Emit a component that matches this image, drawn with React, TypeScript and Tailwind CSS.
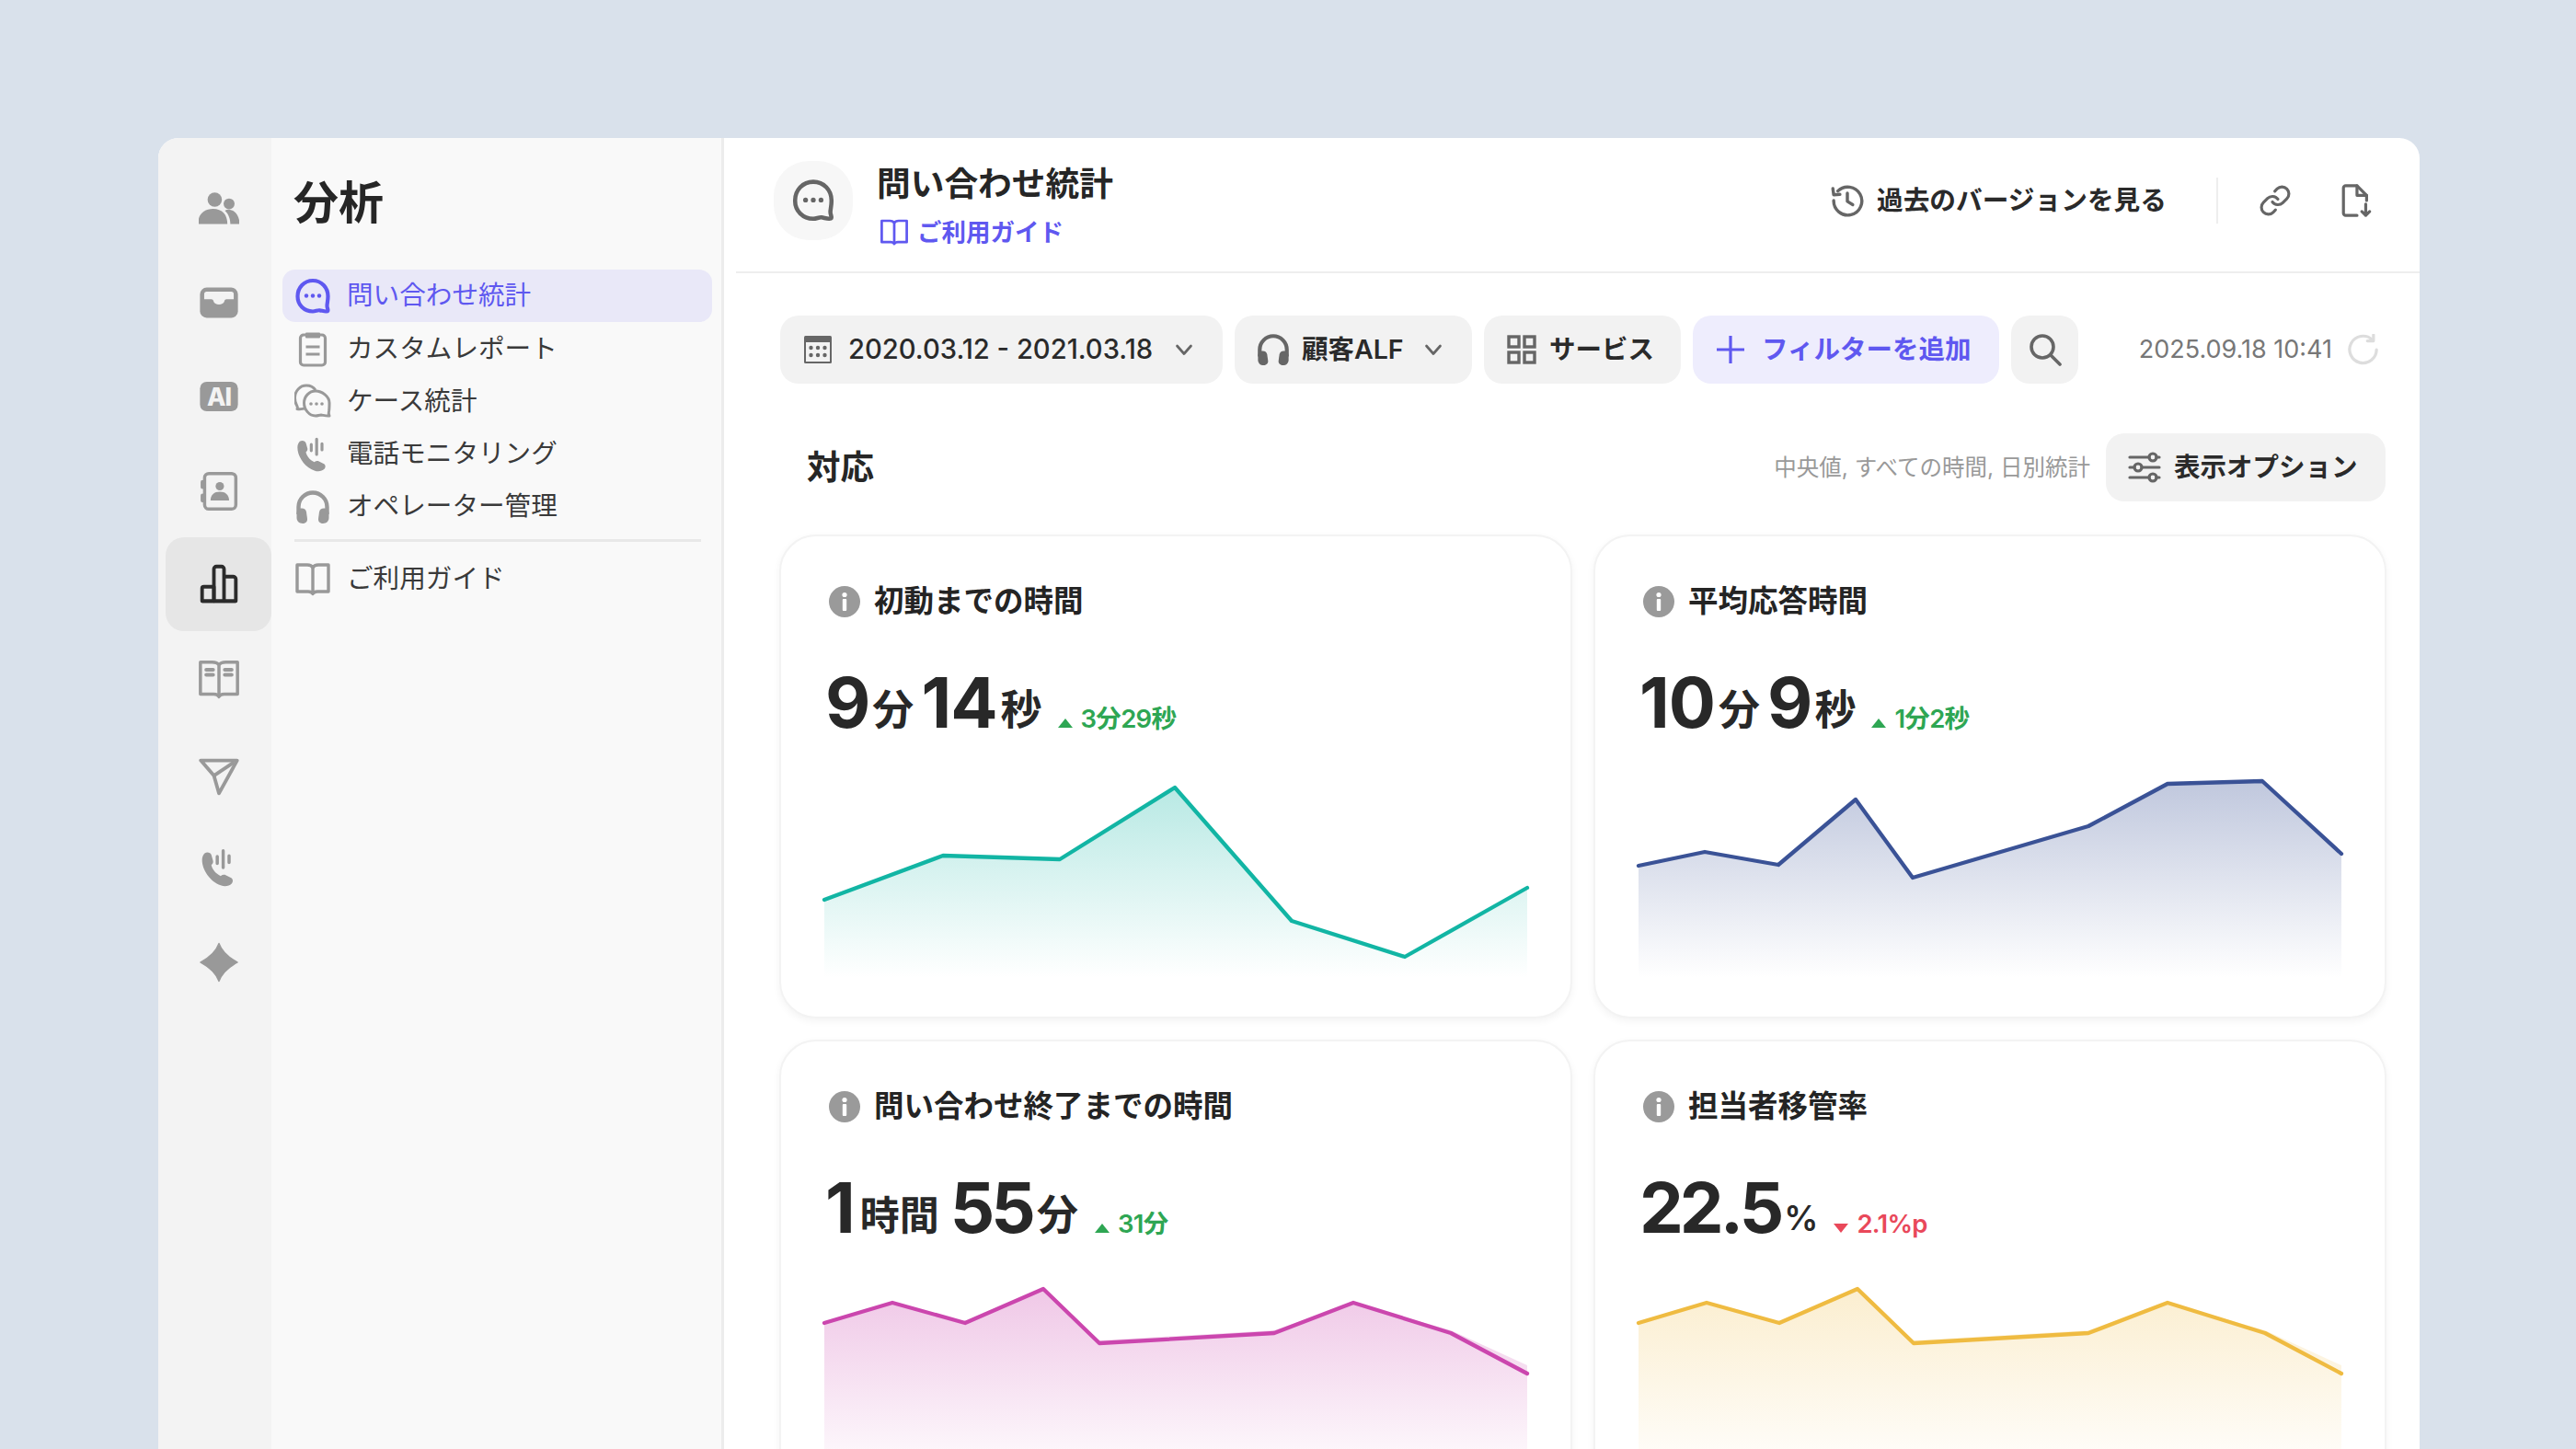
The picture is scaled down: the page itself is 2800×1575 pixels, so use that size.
import React from 'react';

const FONT = "font-['Inter','Noto_Sans_CJK_JP',sans-serif]";

type IconProps = { className?: string };

// ---- rail icons
function UsersIcon({ className }: IconProps) {
  return (
    <svg viewBox="0 0 48 48" className={className} fill="currentColor">
      <circle cx="19" cy="12" r="8.500" />
      <circle cx="36" cy="17" r="6.500" />
      <path d="M-1 41c0-11 7-18 18-18s17 7 17 18z" />
      <path d="M31 25c2-1 4-1.500 6-1 7 1 11.500 9 11.500 17H37.500c0-6-2-12-6.500-16z" />
    </svg>
  );
}

function InboxIcon({ className }: IconProps) {
  return (
    <svg viewBox="0 0 48 48" className={className}>
      <rect x="1.500" y="6" width="45" height="36" rx="8" fill="currentColor" />
      <path d="M6.500 14a3 3 0 0 1 3-3h29a3 3 0 0 1 3 3v6H33c-1.500 0-2 .8-2.500 2-1.200 5.500-11.800 5.500-13 0-.5-1.200-1-2-2.500-2H6.500z" fill="#f3f3f3" />
    </svg>
  );
}

function AiIcon({ className }: IconProps) {
  return (
    <svg viewBox="0 0 48 48" className={className}>
      <rect x="1.500" y="6.500" width="45" height="35" rx="8" fill="currentColor" />
      <text x="24" y="35" textAnchor="middle" fontFamily="Inter" fontWeight="800" fontSize="29" letterSpacing="-1" fill="#f3f3f3">AI</text>
    </svg>
  );
}

function ContactIcon({ className }: IconProps) {
  return (
    <svg viewBox="0 0 48 48" className={className} fill="none" stroke="currentColor" strokeWidth="3.800">
      <rect x="7" y="3" width="37" height="42" rx="5" />
      <path d="M4.500 13v6M4.500 29v6" strokeWidth="4.500" strokeLinecap="round" />
      <circle cx="25" cy="18" r="5" fill="currentColor" stroke="none" />
      <path d="M14 35c0-7 4.500-10.500 11-10.500S36 28 36 35z" fill="currentColor" stroke="none" />
    </svg>
  );
}

function ChartIcon({ className }: IconProps) {
  return (
    <svg viewBox="0 0 48 48" className={className} fill="none" stroke="currentColor" strokeWidth="4.200" strokeLinejoin="round">
      <path d="M4 44V29a2 2 0 0 1 2-2h12v17z" />
      <path d="M18 44V6a3 3 0 0 1 3-3h6a3 3 0 0 1 3 3v38z" />
      <path d="M30 15h11a3 3 0 0 1 3 3v26H30" />
      <path d="M4 44h40" />
    </svg>
  );
}

function ManualIcon({ className }: IconProps) {
  return (
    <svg viewBox="0 0 48 48" className={className} fill="none" stroke="currentColor" strokeWidth="3.800" strokeLinejoin="round">
      <path d="M2 3h14c4 0 6.500 1 8 3.500C25.500 4 28 3 32 3h14v38H30c-3 0-5 1-6 3-1-2-3-3-6-3H2z" />
      <path d="M24 7v36" />
      <path d="M9 12h8M9 18h8M31 12h8M31 18h8" strokeWidth="4.500" strokeLinecap="round" />
    </svg>
  );
}

function SendIcon({ className }: IconProps) {
  return (
    <svg viewBox="0 0 48 48" className={className} fill="none" stroke="currentColor" strokeWidth="4.200" strokeLinejoin="round">
      <path d="M2.500 5h43L24 44l-6-21z" />
      <path d="M18 23 42 7" />
    </svg>
  );
}

function CallIcon({ className }: IconProps) {
  return (
    <svg viewBox="0 0 48 48" className={className}>
      <path d="M7 7c3-2 7-1 8 2l2 7c.5 2-.5 3.500-2 5 1 5 5 10 11 13 2-1.500 4-2 6-1l6 3c3 1.500 3 5 1 7-3 3-8 4-13 2C14 41 4 27 4 15c0-3 1-6 3-8z" fill="currentColor" />
      <path d="M29 4v20M22 11v8M36 10v8" stroke="currentColor" strokeWidth="3.800" strokeLinecap="round" fill="none" />
    </svg>
  );
}

function SparkIcon({ className }: IconProps) {
  return (
    <svg viewBox="0 0 48 48" className={className} fill="currentColor">
      <path d="M24 1.500C27 10 35 18 46 24 35 30 27 38 24 46.500 21 38 13 30 2 24 13 18 21 10 24 1.500z" strokeLinejoin="round" stroke="currentColor" strokeWidth="1.500" />
    </svg>
  );
}

// ---- menu icons
function ChatIcon({ className, strokeWidth = 4.200 }: IconProps & { strokeWidth?: number }) {
  return (
    <svg viewBox="0 0 40 40" className={className} fill="none" stroke="currentColor" strokeWidth={strokeWidth}>
      <path d="M20 3C10.500 3 3.500 10.500 3.500 20S10.500 36.500 20 36.500c3 0 5-1.500 7.500-1.200 2.500.3 8 2.200 8.800.7.8-1.500-1-3-.8-6 .2-3 1-5.500 1-10C36.500 10.500 29.500 3 20 3z" strokeLinejoin="round" />
      <circle cx="13" cy="19.500" r="2.200" fill="currentColor" stroke="none" />
      <circle cx="20" cy="19.500" r="2.200" fill="currentColor" stroke="none" />
      <circle cx="27" cy="19.500" r="2.200" fill="currentColor" stroke="none" />
    </svg>
  );
}

function ClipboardIcon({ className }: IconProps) {
  return (
    <svg viewBox="0 0 40 40" className={className} fill="none" stroke="currentColor" strokeWidth="3.200">
      <rect x="6.500" y="5" width="27" height="33" rx="3.500" />
      <path d="M13 3.500h14v4H13z" fill="currentColor" strokeWidth="2" strokeLinejoin="round" />
      <path d="M12.500 18h15M12.500 26h15" strokeWidth="3.200" />
    </svg>
  );
}

function ChatsIcon({ className }: IconProps) {
  return (
    <svg viewBox="0 0 40 40" className={className} fill="none" stroke="currentColor" strokeWidth="3" strokeLinejoin="round">
      <path d="M11 28c-2 0-4 1.500-8 .5 1-1.500 0-3-.5-4C1 22 .5 19 .5 16.500.5 9 6 3 13 3c4 0 8 2 10 5" />
      <path d="M23 9c-7 0-12.500 6-12.500 13S16 36 23 36c2.500 0 4-1 6-1 2 .2 6 1.500 9 1-1-1.500-1-3-.5-5 .5-2.500 .5-6 .5-9 0-7-8-13-15-13z" />
      <circle cx="18" cy="23" r="1.800" fill="currentColor" stroke="none" />
      <circle cx="24" cy="23" r="1.800" fill="currentColor" stroke="none" />
      <circle cx="30" cy="23" r="1.800" fill="currentColor" stroke="none" />
    </svg>
  );
}

function HeadsetIcon({ className }: IconProps) {
  return (
    <svg viewBox="0 0 40 40" className={className} fill="none">
      <path d="M4.500 28v-8c0-8.500 7-15.500 15.500-15.500S35.500 11.500 35.500 20v8" stroke="currentColor" strokeWidth="4.400" />
      <path d="M2.500 27c0-3 2-5.500 5.500-5.500 2.800 0 4.500 1.500 5 4l1 7.500c.3 2.500-1.500 5-5 5-4 0-6.500-3-6.500-6z" fill="currentColor" />
      <path d="M37.500 27c0-3-2-5.500-5.500-5.500-2.800 0-4.500 1.500-5 4l-1 7.500c-.3 2.500 1.500 5 5 5 4 0 6.500-3 6.500-6z" fill="currentColor" />
    </svg>
  );
}

function BookIcon({ className }: IconProps) {
  return (
    <svg viewBox="0 0 40 40" className={className} fill="none" stroke="currentColor" strokeWidth="3.400" strokeLinejoin="round">
      <path d="M3 5h11c3 0 5 1 6 3 1-2 3-3 6-3h11v29H25c-2.500 0-4 .7-5 2.500-1-1.800-2.500-2.500-5-2.500H3z" />
      <path d="M20 8v28" />
    </svg>
  );
}

// ---- header and filter icons
function HistoryIcon({ className }: IconProps) {
  return (
    <svg viewBox="0 0 40 40" className={className} fill="none" stroke="currentColor" strokeWidth="3.800" strokeLinecap="round" strokeLinejoin="round">
      <path d="M8.500 8.500A17 17 0 1 1 3.500 20" />
      <path d="M2.500 5.500 3.500 13l7.500-.5" />
      <path d="M20 11v10l6.500 4" />
    </svg>
  );
}

function LinkIcon({ className }: IconProps) {
  return (
    <svg viewBox="0 0 24 24" className={className} fill="none" stroke="currentColor" strokeWidth="2.100" strokeLinecap="round" strokeLinejoin="round">
      <path d="M10 13a5 5 0 0 0 7.540.54l3-3a5 5 0 0 0-7.070-7.070l-1.720 1.710" />
      <path d="M14 11a5 5 0 0 0-7.540-.54l-3 3a5 5 0 0 0 7.070 7.070l1.710-1.710" />
    </svg>
  );
}

function FileDownIcon({ className }: IconProps) {
  return (
    <svg viewBox="0 0 40 40" className={className} fill="none" stroke="currentColor" strokeWidth="3.400" strokeLinecap="round" strokeLinejoin="round">
      <path d="M21 37H8a2.500 2.500 0 0 1-2.500-2.500v-29A2.500 2.500 0 0 1 8 3h13l11 11v6" />
      <path d="M21 3v11h11" />
      <path d="M31 24v13M26.500 32.500 31 37l4.500-4.500" />
    </svg>
  );
}

function CalendarIcon({ className }: IconProps) {
  return (
    <svg viewBox="0 0 32 32" className={className}>
      <rect x="1" y="1" width="30" height="30" rx="1.500" fill="#666" />
      <rect x="3" y="8" width="26" height="21" fill="#f2f2f2" />
      {[8.500, 16, 23.500].map((x) =>
        [14, 22].map((y) => <circle key={`${x}-${y}`} cx={x} cy={y} r="2.200" fill="#666" />)
      )}
    </svg>
  );
}

function Chevron({ className }: IconProps) {
  return (
    <svg viewBox="0 0 20 20" className={className} fill="none" stroke="currentColor" strokeWidth="2.700" strokeLinecap="round" strokeLinejoin="round">
      <path d="M2.500 6 10 14.500 17.500 6" />
    </svg>
  );
}

function GridIcon({ className }: IconProps) {
  return (
    <svg viewBox="0 0 32 32" className={className} fill="none" stroke="currentColor" strokeWidth="3.400">
      <rect x="2" y="2" width="11" height="11" />
      <rect x="19" y="2" width="11" height="11" />
      <rect x="2" y="19" width="11" height="11" />
      <rect x="19" y="19" width="11" height="11" />
    </svg>
  );
}

function PlusIcon({ className }: IconProps) {
  return (
    <svg viewBox="0 0 32 32" className={className} fill="none" stroke="currentColor" strokeWidth="3.200">
      <path d="M16 1v30M1 16h30" />
    </svg>
  );
}

function SearchIcon({ className }: IconProps) {
  return (
    <svg viewBox="0 0 36 36" className={className} fill="none" stroke="currentColor" strokeWidth="3.600" strokeLinecap="round">
      <circle cx="15" cy="15" r="12" />
      <path d="m24 24 10 10" />
    </svg>
  );
}

function RefreshIcon({ className }: IconProps) {
  return (
    <svg viewBox="0 0 36 36" className={className} fill="none" stroke="currentColor" strokeWidth="3.400" strokeLinecap="round" strokeLinejoin="round">
      <path d="M28 6.500A15.500 15.500 0 1 0 33 18" />
      <path d="M29.500 1v7h-7" />
    </svg>
  );
}

function SlidersIcon({ className }: IconProps) {
  return (
    <svg viewBox="0 0 36 36" className={className} fill="none" stroke="currentColor" strokeWidth="3.200" strokeLinecap="round">
      <path d="M2 7h21M31 7h3M2 18h5M15 18h19M2 29h21M31 29h3" />
      <circle cx="27" cy="7" r="4" />
      <circle cx="11" cy="18" r="4" />
      <circle cx="27" cy="29" r="4" />
    </svg>
  );
}

function InfoIcon() {
  return (
    <svg viewBox="0 0 34 34" className="h-[34px] w-[34px] shrink-0">
      <circle cx="17" cy="17" r="17" fill="#9a9a9a" />
      <circle cx="17" cy="9.500" r="2.600" fill="#fff" />
      <rect x="14.800" y="14" width="4.400" height="13" rx="1" fill="#fff" />
    </svg>
  );
}

const railItems = [
  { icon: UsersIcon, shift: 'translate-y-[1px]' },
  { icon: InboxIcon, shift: '' },
  { icon: AiIcon, shift: '' },
  { icon: ContactIcon, shift: 'translate-y-[1px]' },
  { icon: ChartIcon, shift: '', active: true },
  { icon: ManualIcon, shift: 'translate-y-[2px]' },
  { icon: SendIcon, shift: 'translate-y-[5px]' },
  { icon: CallIcon, shift: 'translate-y-[2px]' },
  { icon: SparkIcon, shift: 'translate-y-[3px]' },
];

const menuItems = [
  { label: '問い合わせ統計', icon: ChatIcon, active: true },
  { label: 'カスタムレポート', icon: ClipboardIcon },
  { label: 'ケース統計', icon: ChatsIcon },
  { label: '電話モニタリング', icon: CallIcon },
  { label: 'オペレーター管理', icon: HeadsetIcon },
];

const shapeLow = '0,69 74,47 153,69 238,32 299,91 489,80 575,47 681,80 764,124';
const shapeLowFill = '0,69 74,47 153,69 238,32 299,88 489,77 575,47 681,77 764,115';

type Part = { n?: string; u?: string; cls: string };

const cards: {
  id: string;
  title: string;
  value: Part[];
  delta: string;
  deltaMargin: string;
  up: boolean;
  color: string;
  alpha: number;
  line: string;
  fill: string;
}[] = [
  {
    id: 'teal',
    title: '初動までの時間',
    value: [
      { n: '9', cls: 'tracking-[-2px]' },
      { u: '分', cls: 'ml-[4px] mr-[8px] text-[45px]' },
      { n: '14', cls: 'tracking-[-1px]' },
      { u: '秒', cls: 'ml-[4px] mr-[12px] text-[45px]' },
    ],
    delta: '3分29秒',
    deltaMargin: 'ml-[5px]',
    up: true,
    color: '#12b5a4',
    alpha: 0.3,
    line: '0,158 129,110 256,114 381,36 508,181 631,220 764,145',
    fill: '0,158 129,110 256,114 381,36 508,181 631,220 764,145',
  },
  {
    id: 'navy',
    title: '平均応答時間',
    value: [
      { n: '10', cls: 'tracking-[-1px]' },
      { u: '分', cls: 'ml-[4px] mr-[8px] text-[45px]' },
      { n: '9', cls: 'tracking-[-2px]' },
      { u: '秒', cls: 'ml-[4px] mr-[12px] text-[45px]' },
    ],
    delta: '1分2秒',
    deltaMargin: 'ml-[5px]',
    up: true,
    color: '#3a5296',
    alpha: 0.32,
    line: '0,121 72,106 152,120 236,49 298,134 489,78 575,32 678,29 764,108',
    fill: '0,121 72,106 152,120 236,49 298,134 489,78 575,32 678,29 764,108',
  },
  {
    id: 'pink',
    title: '問い合わせ終了までの時間',
    value: [
      { n: '1', cls: 'tracking-[-2px]' },
      { u: '時間', cls: 'ml-[7px] mr-[12px] text-[43px]' },
      { n: '55', cls: 'tracking-[-4px]' },
      { u: '分', cls: 'ml-[5px] mr-[12px] text-[45px]' },
    ],
    delta: '31分',
    deltaMargin: 'ml-[6px]',
    up: true,
    color: '#cb46ae',
    alpha: 0.3,
    line: shapeLow,
    fill: shapeLowFill,
  },
  {
    id: 'yellow',
    title: '担当者移管率',
    value: [
      { n: '22.5', cls: 'tracking-[-4px]' },
      { u: '%', cls: 'ml-[4px] mr-[15px] text-[37px] tracking-[-2px]' },
    ],
    delta: '2.1%p',
    deltaMargin: 'ml-[4px]',
    up: false,
    color: '#efbb41',
    alpha: 0.25,
    line: shapeLow,
    fill: shapeLowFill,
  },
];

function AreaChart({ id, line, fill, color, alpha }: { id: string; line: string; fill: string; color: string; alpha: number }) {
  const bottom = 243;
  const last = line.split(' ').slice(-1)[0].split(',')[0];
  return (
    <svg viewBox="0 0 764 250" className="ml-[47px] mt-[12px] block h-[250px] w-[764px] overflow-visible">
      <defs>
        <linearGradient id={id} x1="0" y1="0" x2="0" y2="1">
          <stop offset="0" stopColor={color} stopOpacity={alpha} />
          <stop offset="1" stopColor={color} stopOpacity="0" />
        </linearGradient>
      </defs>
      <polygon points={`0,${bottom} ${fill} ${last},${bottom}`} fill={`url(#${id})`} />
      <polyline points={line} fill="none" stroke={color} strokeWidth="4.300" strokeLinecap="round" strokeLinejoin="round" />
    </svg>
  );
}

function StatCard({ card }: { card: (typeof cards)[number] }) {
  return (
    <div className="h-[526px] rounded-[40px] border-2 border-[#f3f3f3] bg-white pt-[51px] shadow-[0_3px_8px_rgba(0,0,0,0.05)]">
      <div className="ml-[52px] flex h-[40px] items-center gap-[15px]">
        <InfoIcon />
        <span className="text-[32.500px] leading-[40px] font-bold text-[#242424]">{card.title}</span>
      </div>
      <div className="ml-[48px] mt-[44px] flex h-[90px] items-baseline leading-[90px] text-[#282828]">
        {card.value.map((p, i) =>
          p.n ? (
            <span key={i} className={`text-[76px] font-bold ${p.cls}`}>{p.n}</span>
          ) : (
            <span key={i} className={`-translate-y-[3px] font-semibold ${p.cls}`}>{p.u}</span>
          )
        )}
        <span className={`${card.deltaMargin} flex items-baseline gap-[9px] text-[27.500px] font-semibold tracking-[-0.7px] ${card.up ? 'text-[#2ea653]' : 'text-[#e9485a]'}`}>
          <span className={`mb-[8px] h-0 w-0 border-x-[8.500px] border-x-transparent ${card.up ? 'border-b-[10px] border-b-[#2ea653]' : 'border-t-[10px] border-t-[#e9485a]'}`} />
          {card.delta}
        </span>
      </div>
      <AreaChart id={card.id} line={card.line} fill={card.fill} color={card.color} alpha={card.alpha} />
    </div>
  );
}

export default function App() {
  return (
    <div className={`h-screen overflow-hidden bg-[#d9e1eb] pl-[172px] pr-[170px] pt-[150px] ${FONT}`}>
      <div className="flex h-[1425px] overflow-hidden rounded-t-[22px] bg-white">
        {/* icon rail */}
        <aside className="w-[123px] shrink-0 bg-[#f3f3f3] pt-[26px] pl-[8px]">
          {railItems.map(({ icon: Icon, active, shift }, i) => (
            <div
              key={i}
              className={`flex h-[102px] w-[115px] items-center justify-center rounded-[20px] ${active ? 'bg-[#e6e6e6] text-[#2b2b2b]' : 'text-[#999999]'}`}
            >
              <Icon className={`h-[44px] w-[44px] ${shift}`} />
            </div>
          ))}
        </aside>

        {/* sidebar */}
        <nav className="w-[492px] shrink-0 border-r-[3px] border-[#ececec] bg-[#f9f9f9] pl-[12px]">
          <h1 className="ml-[12px] mt-[42px] text-[49px] leading-[58px] font-bold text-[#262626]">分析</h1>
          <ul className="mt-[43px] w-[467px]">
            {menuItems.map(({ label, icon: Icon, active }) => (
              <li
                key={label}
                className={`flex h-[57.300px] items-center rounded-[14px] pl-[12px] text-[28.600px] ${active ? 'bg-[#e9e8f8] text-[#5f58f0]' : 'text-[#3a3a3a]'}`}
              >
                <span className={`flex w-[42px] justify-center ${active ? '' : 'text-[#999999]'}`}>
                  <Icon className="h-[40px] w-[40px]" />
                </span>
                <span className="ml-[16px]">{label}</span>
              </li>
            ))}
          </ul>
          <div className="ml-[13px] mt-[7px] h-[3px] w-[442px] bg-[#e8e8e8]" />
          <div className="mt-[11px] flex h-[57px] items-center pl-[12px] text-[28.600px] text-[#3a3a3a]">
            <span className="flex w-[42px] justify-center text-[#999999]">
              <BookIcon className="h-[40px] w-[40px]" />
            </span>
            <span className="ml-[16px]">ご利用ガイド</span>
          </div>
        </nav>

        {/* main */}
        <main className="min-w-0 flex-1 pl-[13px]">
          <header className="flex h-[147px] items-center justify-between border-b-2 border-[#eeeeee] pb-[9px] pl-[41px] pr-[50px]">
            <div className="flex h-[86px] items-start">
              <div className="flex h-[86px] w-[86px] items-center justify-center rounded-[38px] bg-[#f7f7f7] text-[#666666]">
                <ChatIcon className="h-[48px] w-[48px]" strokeWidth={3.800} />
              </div>
              <div className="ml-[26px]">
                <div className="text-[36.700px] leading-[50px] font-bold text-[#262626]">問い合わせ統計</div>
                <div className="mt-[9px] flex items-center pl-[3px] text-[26.500px] leading-[36px] font-semibold text-[#5f58f0]">
                  <BookIcon className="h-[32px] w-[32px]" />
                  <span className="ml-[9px]">ご利用ガイド</span>
                </div>
              </div>
            </div>
            <div className="flex items-center">
              <HistoryIcon className="h-[36px] w-[36px] text-[#666666]" />
              <span className="ml-[14px] text-[28.700px] font-semibold text-[#2a2a2a]">過去のバージョンを見る</span>
              <div className="ml-[54px] mr-[44px] h-[50px] w-[2px] bg-[#eeeeee]" />
              <LinkIcon className="h-[36px] w-[36px] text-[#666666]" />
              <FileDownIcon className="ml-[51px] h-[38px] w-[38px] text-[#666666]" />
            </div>
          </header>

          <section className="pl-[48px] pr-[37px] pt-[46px]">
            {/* filter row */}
            <div className="flex items-center gap-[13px] text-[28.500px] font-semibold text-[#2a2a2a]">
              <button className="flex h-[74px] w-[481px] items-center rounded-[20px] bg-[#f2f2f2] pl-[25px]">
                <CalendarIcon className="h-[32px] w-[32px]" />
                <span className="ml-[17px] text-[29.200px] font-medium">2020.03.12 - 2021.03.18</span>
                <Chevron className="ml-[24px] h-[20px] w-[20px] text-[#666666]" />
              </button>
              <button className="flex h-[74px] w-[258px] items-center rounded-[20px] bg-[#f2f2f2] pl-[23px]">
                <HeadsetIcon className="h-[38px] w-[38px] text-[#666666]" />
                <span className="ml-[12px]">顧客ALF</span>
                <Chevron className="ml-[22px] h-[20px] w-[20px] text-[#666666]" />
              </button>
              <button className="flex h-[74px] w-[214px] items-center rounded-[20px] bg-[#f2f2f2] pl-[25px]">
                <GridIcon className="h-[32px] w-[32px] text-[#666666]" />
                <span className="ml-[14px]">サービス</span>
              </button>
              <button className="flex h-[74px] w-[333px] items-center rounded-[20px] bg-[#eeedfd] pl-[25px] text-[#5f58f0]">
                <PlusIcon className="h-[32px] w-[32px]" />
                <span className="ml-[18px]">フィルターを追加</span>
              </button>
              <button className="flex h-[74px] w-[73px] items-center justify-center rounded-[20px] bg-[#f2f2f2] text-[#666666]">
                <SearchIcon className="h-[36px] w-[36px]" />
              </button>
              <div className="ml-auto flex items-center pr-[7px]">
                <span className="text-[27px] font-normal text-[#777777]">2025.09.18 10:41</span>
                <RefreshIcon className="ml-[17px] h-[34px] w-[34px] text-[#dddddd]" />
              </div>
            </div>

            {/* section header */}
            <div className="mt-[54px] flex h-[74px] items-center pl-[29px]">
              <h2 className="text-[36.500px] font-bold text-[#262626]">対応</h2>
              <span className="ml-auto text-[24.500px] text-[#999999]">中央値, すべての時間, 日別統計</span>
              <button className="ml-[17px] flex h-[74px] w-[304px] items-center rounded-[20px] bg-[#f2f2f2] pl-[24px] text-[28.500px] font-semibold text-[#2a2a2a]">
                <SlidersIcon className="h-[36px] w-[36px] text-[#666666]" />
                <span className="ml-[14px]">表示オプション</span>
              </button>
            </div>

            {/* cards */}
            <div className="-mx-[1px] mt-[36px] grid grid-cols-2 gap-[23px]">
              {cards.map((c) => (
                <StatCard key={c.id} card={c} />
              ))}
            </div>
          </section>
        </main>
      </div>
    </div>
  );
}
